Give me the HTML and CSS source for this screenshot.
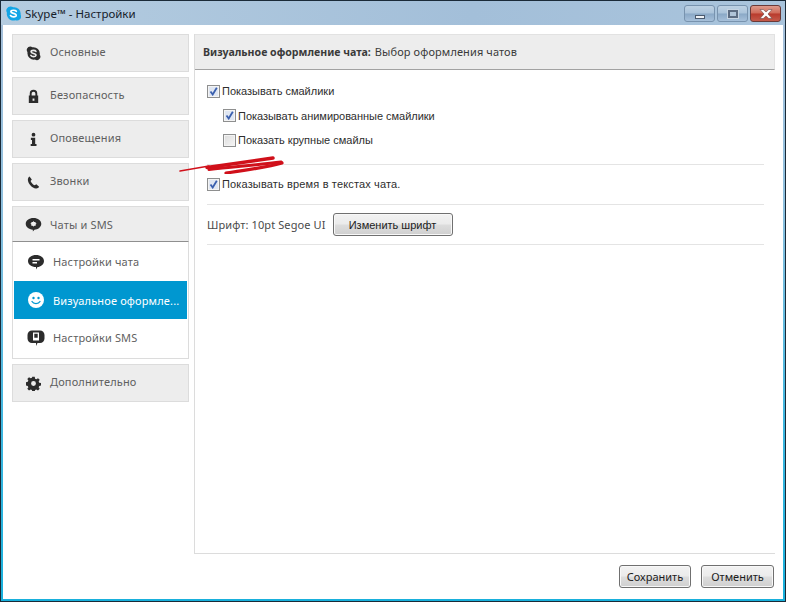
FILE: index.html
```html
<!DOCTYPE html>
<html lang="ru">
<head>
<meta charset="utf-8">
<title>Skype - Настройки</title>
<link rel="stylesheet" href="styles.css">
</head>
<body>
<div class="window">
  <header class="titlebar">
    <svg class="app-icon" viewBox="0 0 16 16"><path fill="#12a5e6" d="M5 .5a4.500 4.500 0 0 1 2.600.9 7 7 0 0 1 8 7.800 4.400 4.400 0 0 1-5.600 6 7 7 0 0 1-9-8A4.400 4.400 0 0 1 5 .5z"/><path fill="none" stroke="#fff" stroke-width="1.800" stroke-linecap="round" d="M11 5.600C10 4.200 5.300 4 5.200 6.100 5.100 8.300 11 7.500 10.900 10 10.700 12 6 12 4.800 10.200"/></svg>
    <span class="title">Skype™ - Настройки</span>
    <div class="controls">
      <div class="ctl ctl-min"><span class="glyph-min"></span></div>
      <div class="ctl ctl-max"><span class="glyph-max"></span></div>
      <div class="ctl-close"><svg class="glyph-x" viewBox="0 0 14 10"><path fill="#fff" stroke="#6b4a48" stroke-width=".6" d="M1 .5h3.200L7 3 9.800.5H13L9 5l4 4.500H9.800L7 7 4.200 9.500H1L5 5z"/></svg></div>
    </div>
  </header>
  <div class="client">
    <div class="body">
      <nav class="sidebar">
        <div class="nav-item">
          <svg class="nav-icon" viewBox="0 0 16 16"><path fill="#2c2c2c" d="M4.500.5a3.500 3.500 0 0 1 2.300.8 7 7 0 0 1 7.900 7.900 3.800 3.800 0 0 1-5.200 5.300 7 7 0 0 1-7.900-7.900A3.800 3.800 0 0 1 4.500.5z"/><path fill="none" stroke="#ececec" stroke-width="1.700" stroke-linecap="round" d="M10.600 5.800C9.800 4.300 5.500 4.200 5.400 6.200 5.400 8.400 10.800 7.500 10.700 9.900 10.500 11.800 6.300 11.800 5.200 10"/></svg>
          <span>Основные</span>
        </div>
        <div class="nav-item">
          <svg class="nav-icon" viewBox="0 0 16 16"><path fill="none" stroke="#2c2c2c" stroke-width="2" d="M5 8V4.800a3 3 0 0 1 6 0V8"/><path fill="#2c2c2c" fill-rule="evenodd" d="M3 7h10v8H3zM7 10v2.500h2V10z"/></svg>
          <span>Безопасность</span>
        </div>
        <div class="nav-item">
          <svg class="nav-icon" viewBox="0 0 16 16"><circle cx="8" cy="2.800" r="2" fill="#2c2c2c"/><path fill="#2c2c2c" d="M5.200 6.200h4.600v6.600h1.400V15H5v-2.200h1.400V8.400H5.200z"/></svg>
          <span>Оповещения</span>
        </div>
        <div class="nav-item">
          <svg class="nav-icon" viewBox="0 0 16 16"><path fill="#2c2c2c" d="M3.800 1.500l2.400 3.200-1.300 1.600c.6 1.800 2.600 4 4.400 4.700l1.700-1.200 3 2.700c-.6 1.300-2 2-3.400 1.800C6.400 13.800 2.400 9.500 2 5.200 1.900 3.700 2.600 2.200 3.800 1.500z"/></svg>
          <span>Звонки</span>
        </div>
        <div class="nav-group">
          <div class="nav-item nav-head">
            <svg class="nav-icon nav-icon-wide" viewBox="0 0 18 16"><path fill="#2c2c2c" fill-rule="evenodd" d="M9 1c4.700 0 8.300 2.700 8.300 6.300S13.700 13.600 10 13.600L8.300 15.500V13.500C4 13.300.7 10.800.7 7.300S4.300 1 9 1zM9 4.200L9.700 5.300 11.100 5.200 11.300 6.500 12.300 7.300 11.300 8.100 11.100 9.500 9.700 9.300 9 10.400 8.300 9.300 6.900 9.500 6.700 8.100 5.700 7.300 6.700 6.500 6.900 5.200 8.300 5.300z"/></svg>
            <span>Чаты и SMS</span>
          </div>
          <div class="sub">
            <div class="sub-item">
              <svg class="sub-icon" viewBox="0 0 18 18"><path fill="#2c2c2c" fill-rule="evenodd" d="M9 2c4.400 0 8 2.400 8 6s-3.600 6-6.500 6L9 16.500V14C4.500 14 1 11.600 1 8s3.600-6 8-6zM5.500 6v1.500h7V6zM5.500 9v1.500h4.500V9z"/></svg>
              <span>Настройки чата</span>
            </div>
            <div class="sub-item sub-active">
              <svg class="sub-icon" viewBox="0 0 18 18"><circle cx="9" cy="9" r="8" fill="#fff"/><circle cx="6.500" cy="7" r="1.200" fill="#0097d0"/><circle cx="11.500" cy="7" r="1.200" fill="#0097d0"/><path fill="none" stroke="#0097d0" stroke-width="1.300" stroke-linecap="round" d="M5 10.500c1.500 2.800 6.500 2.800 8 0"/></svg>
              <span>Визуальное оформле...</span>
            </div>
            <div class="sub-item">
              <svg class="sub-icon" viewBox="0 0 18 18"><path fill="#2c2c2c" fill-rule="evenodd" d="M5 1.500h8c2.500 0 4.500 2 4.500 4.500v3.500c0 2.500-2 4.500-4.500 4.500h-2.500L9 17v-3H5C2.500 14 .5 12 .5 9.500V6C.5 3.500 2.500 1.500 5 1.500zM6 3.500v8h6v-8zM7.300 4.800h3.400v4H7.300z"/></svg>
              <span>Настройки SMS</span>
            </div>
          </div>
        </div>
        <div class="nav-item">
          <svg class="nav-icon" viewBox="0 0 16 16"><path fill="#2c2c2c" fill-rule="evenodd" d="M6.700.8h2.600l.4 2 1.300.6 1.800-1.100 1.800 1.800-1.100 1.800.6 1.300 2 .4v2.600l-2 .4-.6 1.300 1.100 1.800-1.800 1.800-1.800-1.100-1.300.6-.4 2H6.700l-.4-2-1.300-.6-1.800 1.100-1.800-1.800 1.100-1.800-.6-1.300-2-.4V6.600l2-.4.6-1.300-1.100-1.800 1.800-1.800 1.800 1.100 1.300-.6zM8 5.400a2.500 2.500 0 1 0 0 5.200 2.500 2.500 0 0 0 0-5.200z"/></svg>
          <span>Дополнительно</span>
        </div>
      </nav>
      <main class="panel">
        <div class="panel-head"><b class="head-strong">Визуальное оформление чата:</b><span class="head-rest">Выбор оформления чатов</span></div>
        <div class="panel-body">
          <section class="group group-smileys">
            <label class="check-row"><span class="box checked"><svg viewBox="0 0 9 9"><path fill="none" stroke="#3a5fae" stroke-width="1.800" d="M1.500 4.500L3.700 7.500 7.800.8"/></svg></span>Показывать смайлики</label>
            <label class="check-row indent check-tight"><span class="box checked"><svg viewBox="0 0 9 9"><path fill="none" stroke="#3a5fae" stroke-width="1.800" d="M1.500 4.500L3.700 7.500 7.800.8"/></svg></span>Показывать анимированные смайлики</label>
            <label class="check-row indent"><span class="box"></span>Показать крупные смайлы</label>
          </section>
          <section class="group group-time">
            <label class="check-row check-wide"><span class="box checked"><svg viewBox="0 0 9 9"><path fill="none" stroke="#3a5fae" stroke-width="1.800" d="M1.500 4.500L3.700 7.500 7.800.8"/></svg></span>Показывать время в текстах чата.</label>
          </section>
          <section class="group group-font">
            <span class="font-label">Шрифт: 10pt Segoe UI</span>
            <button class="btn btn-font" type="button">Изменить шрифт</button>
          </section>
        </div>
      </main>
    </div>
    <footer class="footer">
      <button class="btn btn-save" type="button">Сохранить</button>
      <button class="btn btn-cancel" type="button">Отменить</button>
    </footer>
    <svg class="scribble" viewBox="0 0 112 24"><g fill="none" stroke="#d0101a" stroke-linecap="round"><path stroke-width="1.500" d="M3 21L32 16"/><path stroke-width="3.500" d="M30 17.500C55 14 80 10.500 96 8"/><path stroke-width="3" d="M32 19.500C60 16.500 85 14.500 104 12"/><path stroke-width="3.200" d="M49 23C70 20 92 17 105 13"/></g></svg>
  </div>
</div>
</body>
</html>
```
FILE: styles.css
```css
* { box-sizing: border-box; }
html, body { margin: 0; height: 100%; }
body {
  width: 786px;
  height: 602px;
  overflow: hidden;
  font-family: "Noto Sans", "Open Sans", sans-serif;
  font-size: 11px;
  color: #3a3a3a;
}
.window {
  width: 786px;
  height: 602px;
  display: flex;
  flex-direction: column;
  border: 1px solid #1a2a38;
  background: linear-gradient(#a9c3da 0, #a5c0da 26px, #8fc0de 200px, #3fb6df 420px, #17b0dc 602px);
  padding: 0 2px 2px 2px;
}
.titlebar {
  height: 24px;
  flex: none;
  display: flex;
  align-items: center;
  color: #16212b;
  font-size: 11.500px;
  background: linear-gradient(90deg, #b4cce0, #a3bfd9 60%, #a9c4dc);
  margin: 0 -2px;
  padding-left: 5px;
}
.app-icon { width: 15px; height: 15px; margin-right: 4px; flex: none; }
.title { flex: 1; }
.controls { display: flex; align-items: flex-start; align-self: flex-start; margin-right: 4px; gap: 2px; margin-top: 4px; }
.ctl, .ctl-close {
  height: 17px;
  border-radius: 3px;
  display: flex;
  align-items: center;
  justify-content: center;
  border: 1px solid #7893ae;
}
.ctl {
  width: 31px;
  background: linear-gradient(#bdd1e3 0, #aac3da 48%, #8aa8c6 52%, #a6c0da 100%);
}
.ctl-close {
  width: 31px;
  border-color: #6a3a38;
  background: linear-gradient(#dd9a8c 0, #cf6a58 48%, #b83a2c 52%, #c45a4a 100%);
}
.glyph-min { width: 10px; height: 4px; background: #eef2f6; border: 1px solid #4a5a6e; margin-top: 6px; }
.glyph-max { width: 10px; height: 8px; border: 2px solid #5c6c82; outline: 1px solid #c6d4e2; background: #b0c4d8; }
.glyph-x { width: 14px; height: 10px; }
.client {
  flex: 1;
  min-height: 0;
  position: relative;
  background: #fff;
  display: flex;
  flex-direction: column;
  padding: 9px 8px 0 9px;
}
.body { display: flex; gap: 5px; flex: 1; min-height: 0; }
.sidebar { width: 177px; flex: none; display: flex; flex-direction: column; gap: 5px; }
.nav-item {
  height: 38px;
  flex: none;
  display: flex;
  align-items: center;
  background: #ededed;
  border: 1px solid #dcdcdc;
  padding: 0 0 3px 13px;
  color: #5f5f5f;
  letter-spacing: .15px;
}
.nav-icon { width: 15px; height: 15px; flex: none; margin-right: 9px; margin-top: 3px; }
.nav-icon-wide { width: 17px; margin: 0 8px 0 -1px; }
.nav-group { display: flex; flex-direction: column; }
.nav-head { height: 36px; border-bottom: 1px solid #8f8f8f; padding-bottom: 0; }
.sub { border: 1px solid #dcdcdc; border-top: 0; padding: 0 1px 1px; height: 117px; display: flex; flex-direction: column; }
.sub-item { height: 38px; flex: none; display: flex; align-items: center; padding-left: 13px; color: #5f5f5f; letter-spacing: .15px; }
.sub-item:first-child { height: 39px; }
.sub-item:last-child { padding-bottom: 1px; }
.sub-active { background: #0097d0; color: #fff; }
.sub-icon { width: 18px; height: 18px; margin-right: 8px; flex: none; }
.panel { flex: 1; min-width: 0; border-left: 1px solid #dcdcdc; border-bottom: 1px solid #dcdcdc; display: flex; flex-direction: column; }
.panel-head {
  height: 36px;
  flex: none;
  display: flex;
  align-items: center;
  gap: 4px;
  background: #ededed;
  border-top: 1px solid #e2e2e2;
  border-right: 1px solid #e2e2e2;
  border-bottom: 1px solid #a2a2a2;
  padding: 0 0 1px 8px;
  color: #3a3a3a;
  white-space: pre;
}
.head-strong { font-size: 10.600px; }
.head-rest { letter-spacing: .1px; }
.panel-body { padding: 0 11px 0 12px; }
.group { border-bottom: 1px solid #e4e4e4; }
.group-smileys { height: 95px; padding-top: 9px; display: flex; flex-direction: column; }
.group-time { height: 40px; padding-top: 7px; }
.group-font { height: 40px; display: flex; align-items: center; gap: 7px; }
.check-row { height: 24.500px; display: flex; align-items: center; color: #2e2e2e; gap: 2px; font-family: "Liberation Sans", sans-serif; }
.check-tight { letter-spacing: -.03px; }
.check-wide { letter-spacing: .15px; }
.indent { padding-left: 16px; }
.box {
  width: 13px;
  height: 13px;
  flex: none;
  border: 1px solid #8e8f8f;
  background: linear-gradient(135deg, #dcdcdc, #f6f6f6);
  box-shadow: inset 0 0 0 1px #f4f4f4;
  padding: 1px;
  display: flex;
}
.box.checked { background: #dfe6f2; }
.box svg { width: 100%; height: 100%; }
.font-label { color: #4a4a4a; letter-spacing: .1px; }
.btn {
  font: inherit;
  color: #1c1c1c;
  height: 23px;
  border: 1px solid #707070;
  border-radius: 3px;
  background: linear-gradient(#f2f2f2 0, #ebebeb 48%, #dddddd 52%, #cfcfcf 100%);
  box-shadow: inset 0 0 0 1px #f8f8f8;
  padding: 0;
}
.btn-font { width: 120px; font-family: "Liberation Sans", sans-serif; }
.footer { flex: none; height: 45px; display: flex; justify-content: flex-end; align-items: flex-start; gap: 10px; padding-top: 11px; margin-right: 1px; }
.btn-save { width: 72px; }
.btn-cancel { width: 73px; }
.scribble { position: absolute; left: 174px; top: 125px; width: 112px; height: 24px; }
```
